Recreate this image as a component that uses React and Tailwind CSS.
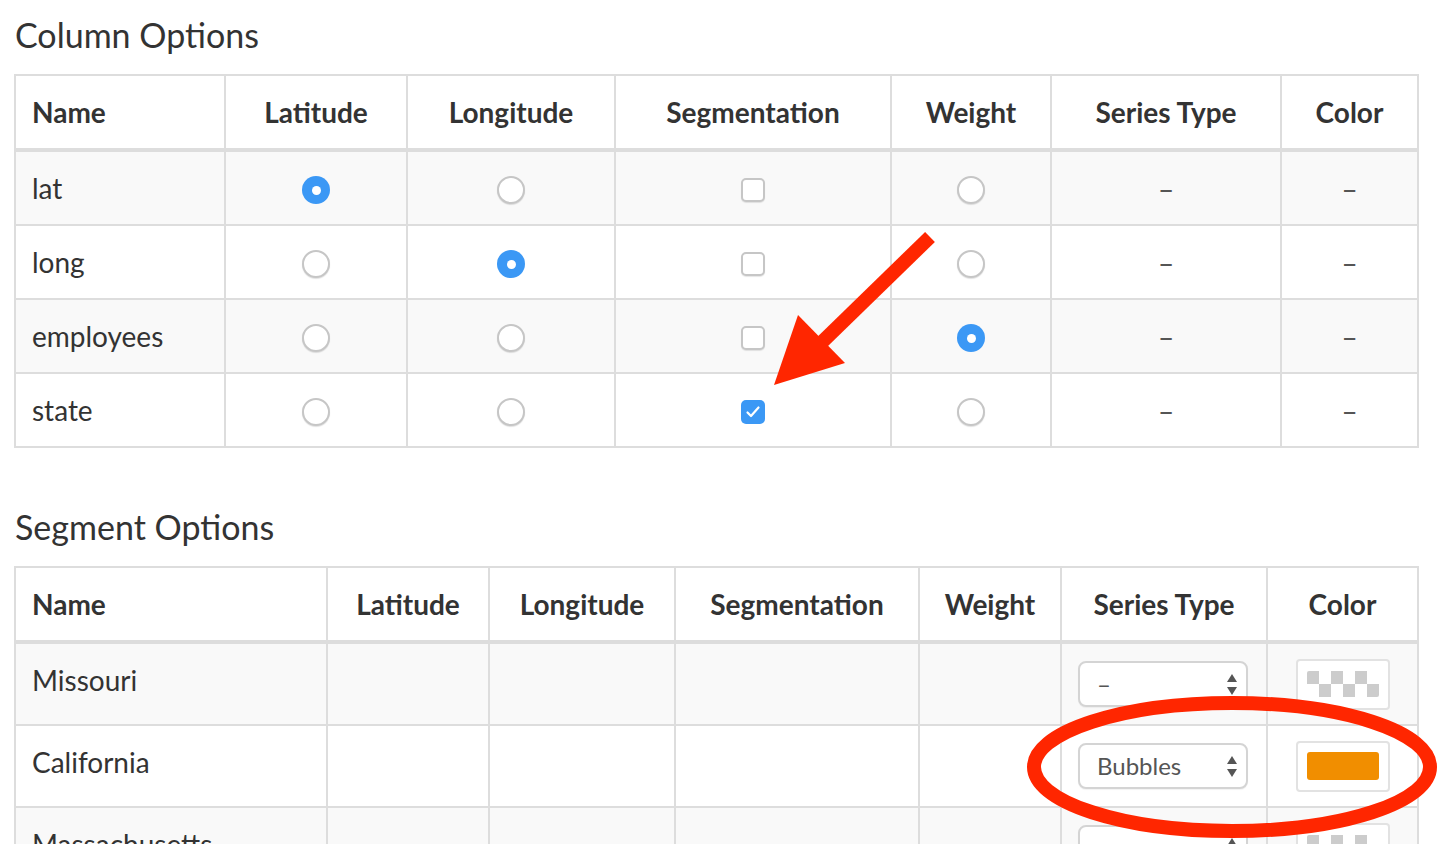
import React from "react";

function Radio({ on }) {
  if (on)
    return (
      <span className="inline-flex w-[28px] h-[28px] rounded-full bg-[#3b98f5] items-center justify-center align-middle">
        <span className="w-[9px] h-[9px] rounded-full bg-white" />
      </span>
    );
  return (
    <span className="inline-block w-[28px] h-[28px] rounded-full border-2 border-[#c6c6c6] bg-white shadow-[0_1px_1px_rgba(0,0,0,0.12)] align-middle" />
  );
}

function Check({ on }) {
  if (on)
    return (
      <span className="inline-flex w-[24px] h-[24px] rounded-[5px] bg-[#3b98f5] items-center justify-center align-middle">
        <svg width="16" height="14" viewBox="0 0 16 14">
          <path d="M2.5 7.5 L6 11 L13.5 2.5" fill="none" stroke="white" strokeWidth="2.2" strokeLinecap="round" strokeLinejoin="round" />
        </svg>
      </span>
    );
  return (
    <span className="inline-block w-[24px] h-[24px] rounded-[5px] border-2 border-[#c6c6c6] bg-white shadow-[0_1px_1px_rgba(0,0,0,0.1)] align-middle" />
  );
}

function Dash() {
  return <span className="text-[#555]">–</span>;
}

function Select({ value }) {
  return (
    <div className="relative flex items-center w-[170px] h-[46px] rounded-[8px] border-2 border-[#d4d4d4] bg-white pl-[17px] text-[24px] text-[#555] shadow-[0_1px_1px_rgba(0,0,0,0.05)]">
      <span className="leading-none">{value}</span>
      <svg className="absolute right-[8px] top-[10px]" width="12" height="23" viewBox="0 0 12 23">
        <path d="M6 1 L11 9 L1 9 Z" fill="#555" />
        <path d="M6 22 L11 14 L1 14 Z" fill="#555" />
      </svg>
    </div>
  );
}

function Swatch({ color }) {
  return (
    <div className="mx-auto flex items-center justify-center w-[94px] h-[51px] rounded-[4px] border-2 border-[#e2e2e2] bg-white">
      {color ? (
        <div className="w-[72px] h-[28px] rounded-[3px] bg-[#f18e00]" />
      ) : (
        <div className="w-[72px] h-[26px] rounded-[2px] bg-[conic-gradient(#ffffff_25%,#cccccc_0_50%,#ffffff_0_75%,#cccccc_0)] bg-[length:24px_26px]" />
      )}
    </div>
  );
}

const colRows = [
  { name: "lat", lat: true },
  { name: "long", lng: true },
  { name: "employees", w: true },
  { name: "state", seg: true },
];

const heads = ["Name", "Latitude", "Longitude", "Segmentation", "Weight", "Series Type", "Color"];

function Head({ widths }) {
  return (
    <>
      <colgroup>
        {widths.map((w, i) => (
          <col key={i} style={{ width: w }} />
        ))}
      </colgroup>
      <thead>
        <tr>
          {heads.map((h, i) => (
            <th
              key={h}
              className={`border-2 border-b-4 border-[#dddddd] px-[16px] py-0 font-bold text-[#333] ${i === 0 ? "text-left" : "text-center"}`}
            >
              <div className={`h-[72px] flex items-center ${i === 0 ? "justify-start" : "justify-center"}`}>{h}</div>
            </th>
          ))}
        </tr>
      </thead>
    </>
  );
}

export default function App() {
  const cell = "border-2 border-[#dddddd] px-[16px] py-0";
  return (
    <div className="relative w-[1442px] h-[844px] overflow-hidden bg-white font-['Source_Sans_Pro','Lato',sans-serif] text-[#333] text-[28px] leading-[40px]">
      <div className="pl-[14px] pt-[15px]">
        <h3 className="text-[34px] leading-[40px] font-normal pl-[1px] mb-[19px]">Column Options</h3>
        <table className="table-fixed border-collapse w-[1403px] border-2 border-[#dddddd]">
          <Head widths={[210, 182, 208, 276, 160, 230, 137]} />
          <tbody>
            {colRows.map((r, i) => (
              <tr key={r.name} className={i % 2 === 0 ? "bg-[#f9f9f9]" : "bg-white"}>
                <td className={cell}>
                  <div className="h-[72px] flex items-center">{r.name}</div>
                </td>
                <td className={cell}>
                  <div className="h-[72px] pt-[4px] flex items-center justify-center"><Radio on={r.lat} /></div>
                </td>
                <td className={cell}>
                  <div className="h-[72px] pt-[4px] flex items-center justify-center"><Radio on={r.lng} /></div>
                </td>
                <td className={cell}>
                  <div className="h-[72px] pt-[4px] flex items-center justify-center"><Check on={r.seg} /></div>
                </td>
                <td className={cell}>
                  <div className="h-[72px] pt-[4px] flex items-center justify-center"><Radio on={r.w} /></div>
                </td>
                <td className={cell}>
                  <div className="h-[72px] pt-[2px] flex items-center justify-center"><Dash /></div>
                </td>
                <td className={cell}>
                  <div className="h-[72px] pt-[2px] flex items-center justify-center"><Dash /></div>
                </td>
              </tr>
            ))}
          </tbody>
        </table>

        <h3 className="text-[34px] leading-[40px] font-normal pl-[1px] mt-[59px] mb-[19px]">Segment Options</h3>
        <table className="table-fixed border-collapse w-[1403px] border-2 border-[#dddddd]">
          <Head widths={[312, 162, 186, 244, 142, 206, 151]} />
          <tbody>
            {[
              { name: "Missouri", sel: "–", color: false },
              { name: "California", sel: "Bubbles", color: true },
              { name: "Massachusetts", sel: "–", color: false },
            ].map((r, i) => (
              <tr key={r.name} className={i % 2 === 0 ? "bg-[#f9f9f9]" : "bg-white"}>
                <td className={cell}>
                  <div className="h-[80px] pb-[8px] flex items-center">{r.name}</div>
                </td>
                <td className={cell}><div className="h-[80px]" /></td>
                <td className={cell}><div className="h-[80px]" /></td>
                <td className={cell}><div className="h-[80px]" /></td>
                <td className={cell}><div className="h-[80px]" /></td>
                <td className={cell}>
                  <div className="h-[80px] flex items-center"><Select value={r.sel} /></div>
                </td>
                <td className={cell}>
                  <div className="h-[80px] flex items-center justify-center"><Swatch color={r.color} /></div>
                </td>
              </tr>
            ))}
          </tbody>
        </table>
      </div>

      <svg className="absolute left-0 top-0 pointer-events-none" width="1442" height="844" viewBox="0 0 1442 844">
        <line x1="930" y1="237" x2="818" y2="346" stroke="#ff2600" strokeWidth="14" />
        <polygon points="774,385 798,315 845,363" fill="#ff2600" />
        <ellipse cx="1232" cy="767" rx="198" ry="64" fill="none" stroke="#ff2600" strokeWidth="14" />
      </svg>
    </div>
  );
}
